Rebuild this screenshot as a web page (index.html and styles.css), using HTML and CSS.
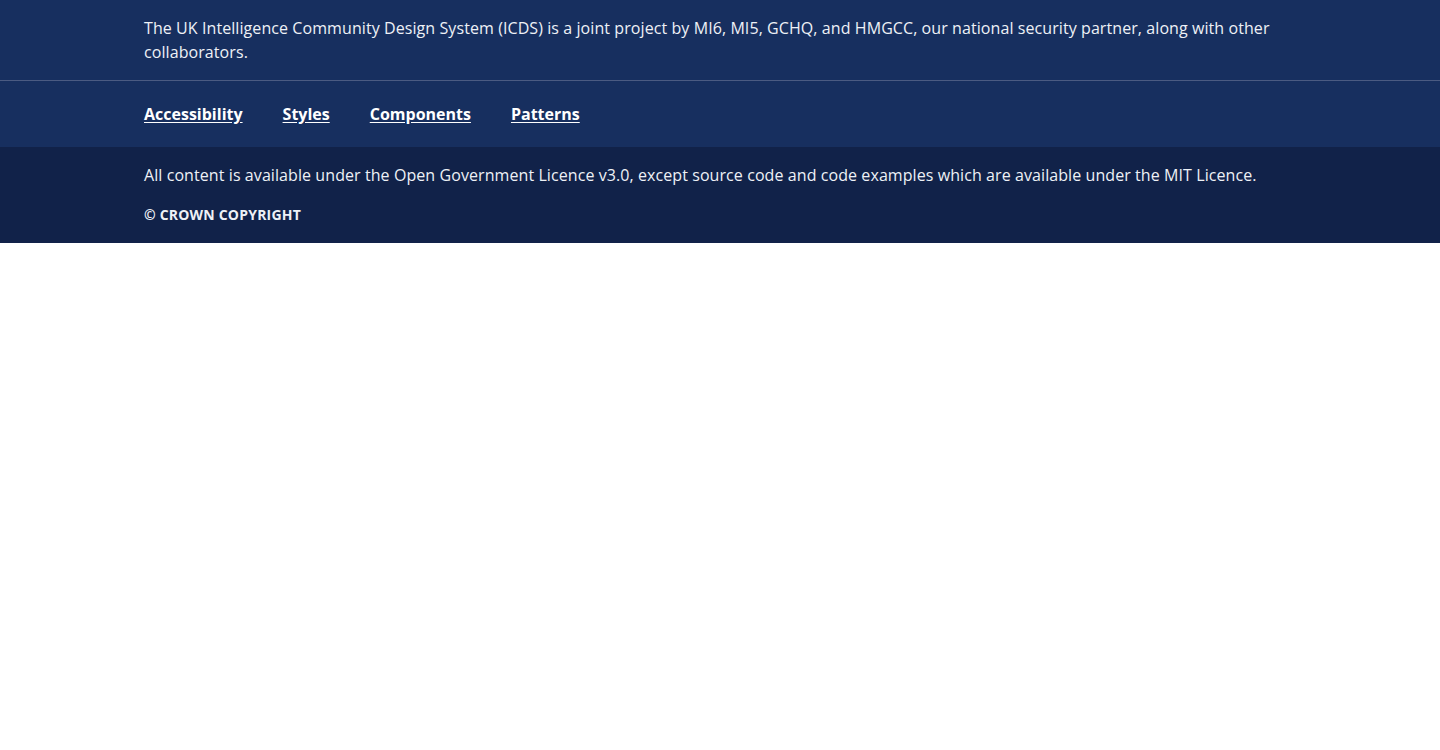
FILE: index.html
```html
<!DOCTYPE html>
<html lang="en">
<head>
<meta charset="utf-8">
<title>ICDS Footer</title>
<link rel="stylesheet" href="styles.css">
</head>
<body>
<footer class="footer">
  <div class="footer-top">
    <div class="container">
      <p class="intro">The UK Intelligence Community Design System (ICDS) is a joint project by MI6, MI5, GCHQ, and HMGCC, our national security partner, along with other collaborators.</p>
    </div>
  </div>
  <nav class="footer-nav">
    <div class="container nav-list">
      <a href="#" class="nav-link">Accessibility</a>
      <a href="#" class="nav-link">Styles</a>
      <a href="#" class="nav-link">Components</a>
      <a href="#" class="nav-link">Patterns</a>
    </div>
  </nav>
  <div class="footer-bottom">
    <div class="container">
      <p class="licence">All content is available under the Open Government Licence v3.0, except source code and code examples which are available under the MIT Licence.</p>
      <p class="copyright">© Crown Copyright</p>
    </div>
  </div>
</footer>
</body>
</html>
```
FILE: styles.css
```css
html, body {
  margin: 0;
  padding: 0;
  background: #ffffff;
}
body {
  font-family: "Open Sans", "Noto Sans", sans-serif;
  color: #ffffff;
}
.container {
  max-width: 1152px;
  margin: 0 auto;
}
.footer-top {
  background: #172f5f;
  padding: 16px 0;
  border-bottom: 1px solid #4b5b82;
}
.intro {
  margin: 0;
  font-size: 16px;
  line-height: 24px;
  letter-spacing: 0.08px;
  color: #eef1f6;
}
.footer-nav {
  background: #172f5f;
  padding: 21px 0;
}
.nav-list {
  display: flex;
  gap: 40px;
}
.nav-link {
  color: #ffffff;
  font-weight: 700;
  font-size: 16px;
  line-height: 24px;
  text-decoration: underline;
  text-underline-offset: 2px;
}
.footer-bottom {
  background: #112249;
  padding: 16px 0;
}
.licence {
  margin: 0;
  font-size: 16px;
  line-height: 24px;
  letter-spacing: 0.08px;
  color: #eef1f6;
}
.copyright {
  margin: 16px 0 0;
  font-size: 14px;
  line-height: 24px;
  font-weight: 700;
  text-transform: uppercase;
  letter-spacing: 0.2px;
  color: #eef1f6;
}
```
